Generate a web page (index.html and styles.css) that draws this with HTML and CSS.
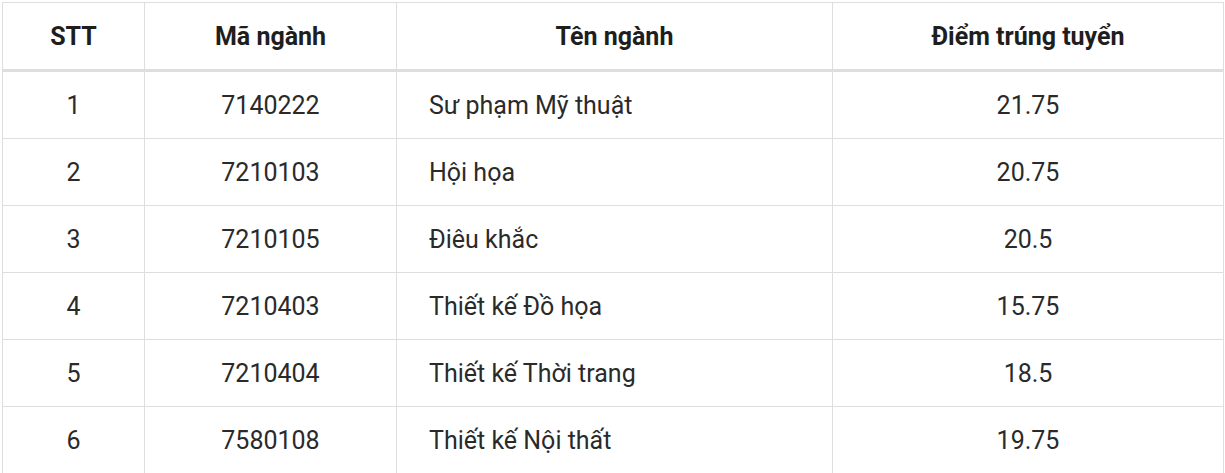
FILE: index.html
```html
<!DOCTYPE html>
<html lang="vi">
<head>
<meta charset="utf-8">
<link rel="stylesheet" href="styles.css">
</head>
<body>
<div class="wrap">
<table class="score-table">
  <colgroup>
    <col class="c1"><col class="c2"><col class="c3"><col class="c4">
  </colgroup>
  <thead>
    <tr><th>STT</th><th>Mã ngành</th><th>Tên ngành</th><th>Điểm trúng tuyển</th></tr>
  </thead>
  <tbody>
    <tr><td>1</td><td>7140222</td><td class="name">Sư phạm Mỹ thuật</td><td>21.75</td></tr>
    <tr><td>2</td><td>7210103</td><td class="name">Hội họa</td><td>20.75</td></tr>
    <tr><td>3</td><td>7210105</td><td class="name">Điêu khắc</td><td>20.5</td></tr>
    <tr><td>4</td><td>7210403</td><td class="name">Thiết kế Đồ họa</td><td>15.75</td></tr>
    <tr><td>5</td><td>7210404</td><td class="name">Thiết kế Thời trang</td><td>18.5</td></tr>
    <tr><td>6</td><td>7580108</td><td class="name">Thiết kế Nội thất</td><td>19.75</td></tr>
  </tbody>
</table>
</div>
</body>
</html>
```

FILE: styles.css
```css
html, body {
  margin: 0;
  padding: 0;
  background: #fff;
}
.wrap {
  padding: 2px 0 0 2px;
}
.score-table {
  border-collapse: collapse;
  table-layout: fixed;
  width: 1221px;
  font-family: Roboto, "Noto Sans", sans-serif;
  font-size: 25px;
  color: #2a2a2a;
}
.c1 { width: 142px; }
.c2 { width: 252px; }
.c3 { width: 436px; }
.c4 { width: 391px; }
.score-table th,
.score-table td {
  border: 1px solid #dedede;
  text-align: center;
  vertical-align: middle;
  padding: 2px 8px 0;
  line-height: 30px;
}
.score-table th {
  height: 64px;
  font-weight: 700;
  color: #1e1e1e;
  border-bottom: 3px solid #dedede;
}
.score-table td {
  height: 64px;
}
.score-table td.name {
  text-align: left;
  padding-left: 32px;
}
```
